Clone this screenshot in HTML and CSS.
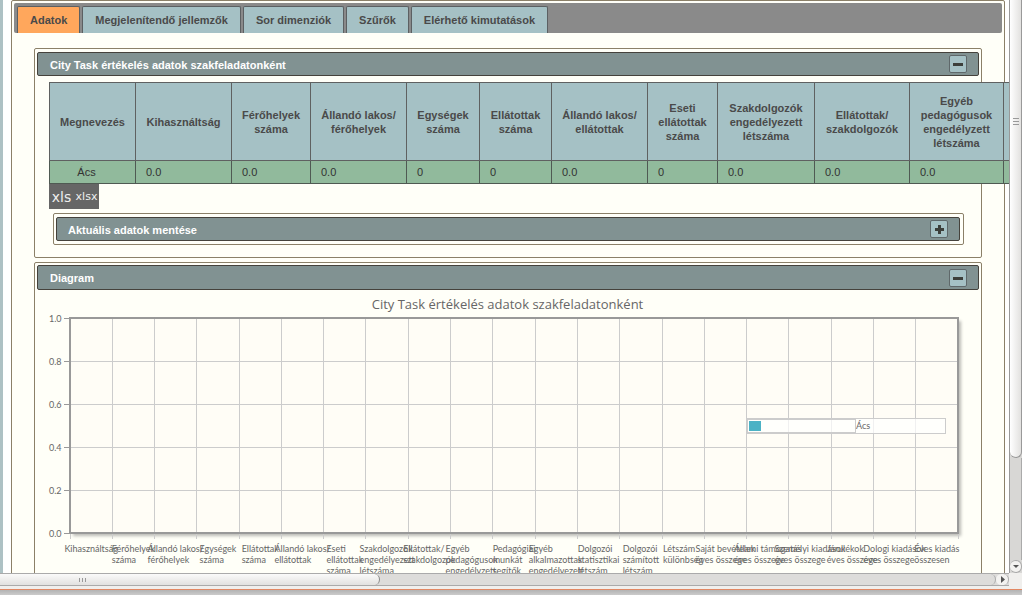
FILE: index.html
```html
<!DOCTYPE html>
<html lang="hu">
<head>
<meta charset="utf-8">
<title>City Task értékelés</title>
<link rel="stylesheet" href="styles.css">
</head>
<body>
<div class="view">
  <div class="pane">
    <main class="sheet">
      <nav class="tabs">
        <button class="tab active" type="button">Adatok</button>
        <button class="tab" type="button">Megjelenítendő jellemzők</button>
        <button class="tab" type="button">Sor dimenziók</button>
        <button class="tab" type="button">Szűrők</button>
        <button class="tab" type="button">Elérhető kimutatások</button>
      </nav>
      <div class="content">
        <section class="panel">
          <header class="bar"><h2>City Task értékelés adatok szakfeladatonként</h2>
            <button class="toggle" type="button" aria-label="Összecsukás"><svg width="16" height="16"><path d="M3 7h10v3H3z"/></svg></button></header>
          <div class="body">
            <table class="data">
              <colgroup><col class="w86"><col class="w96"><col class="w79"><col class="w96"><col class="w73"><col class="w72"><col class="w96"><col class="w70"><col class="w97"><col class="w95"><col class="w94"><col class="w96"></colgroup>
              <thead><tr>
                <th>Megnevezés</th><th>Kihasználtság</th><th>Férőhelyek<br>száma</th><th>Állandó lakos/<br>férőhelyek</th><th>Egységek<br>száma</th><th>Ellátottak<br>száma</th><th>Állandó lakos/<br>ellátottak</th><th>Eseti<br>ellátottak<br>száma</th><th>Szakdolgozók<br>engedélyezett<br>létszáma</th><th>Ellátottak/<br>szakdolgozók</th><th>Egyéb<br>pedagógusok<br>engedélyzett<br>létszáma</th><th></th>
              </tr></thead>
              <tbody><tr>
                <td class="name">Ács</td><td>0.0</td><td>0.0</td><td>0.0</td><td>0</td><td>0</td><td>0.0</td><td>0</td><td>0.0</td><td>0.0</td><td>0.0</td><td></td>
              </tr></tbody>
            </table>
            <div class="exports"><button class="xls" type="button">xls</button><button class="xlsx" type="button">xlsx</button></div>
            <section class="panel nested">
              <header class="bar"><h2>Aktuális adatok mentése</h2>
                <button class="toggle" type="button" aria-label="Kinyitás"><svg width="16" height="16"><path d="M4 7h3V4h3v3h3v3h-3v3H7v-3H4z"/></svg></button></header>
            </section>
          </div>
        </section>
        <section class="panel diagram">
          <header class="bar"><h2>Diagram</h2>
            <button class="toggle" type="button" aria-label="Összecsukás"><svg width="16" height="16"><path d="M3 7h10v3H3z"/></svg></button></header>
          <div class="chart">
            <h3>City Task értékelés adatok szakfeladatonként</h3>
            <div class="axes">
              <div class="yaxis"><span>1.0</span><span>0.8</span><span>0.6</span><span>0.4</span><span>0.2</span><span>0.0</span></div>
              <div class="plot">
                <svg class="grid" width="100%" height="215">
                  <g class="lines">
                    <line x1="0" x2="0" y1="215" y2="221"/>
                    <line x1="4.762%" x2="4.762%" y2="221"/><line x1="9.524%" x2="9.524%" y2="221"/><line x1="14.286%" x2="14.286%" y2="221"/><line x1="19.048%" x2="19.048%" y2="221"/><line x1="23.81%" x2="23.81%" y2="221"/><line x1="28.571%" x2="28.571%" y2="221"/><line x1="33.333%" x2="33.333%" y2="221"/><line x1="38.095%" x2="38.095%" y2="221"/><line x1="42.857%" x2="42.857%" y2="221"/><line x1="47.619%" x2="47.619%" y2="221"/><line x1="52.381%" x2="52.381%" y2="221"/><line x1="57.143%" x2="57.143%" y2="221"/><line x1="61.905%" x2="61.905%" y2="221"/><line x1="66.667%" x2="66.667%" y2="221"/><line x1="71.429%" x2="71.429%" y2="221"/><line x1="76.19%" x2="76.19%" y2="221"/><line x1="80.952%" x2="80.952%" y2="221"/><line x1="85.714%" x2="85.714%" y2="221"/><line x1="90.476%" x2="90.476%" y2="221"/><line x1="95.238%" x2="95.238%" y2="221"/>
                    <line x1="100%" x2="100%" y1="215" y2="221"/>
                    <line x2="100%" y1="43" y2="43"/><line x2="100%" y1="86" y2="86"/><line x2="100%" y1="129" y2="129"/><line x2="100%" y1="172" y2="172"/>
                  </g>
                  <path class="ticks" d="M-6 0h6M-6 43h6M-6 86h6M-6 129h6M-6 172h6M-6 215h6"/>
                  <rect class="frame" width="100%" height="215"/>
                </svg>
                <div class="legend"><span class="key"><i></i></span><span>Ács</span></div>
              </div>
              <div class="xaxis">
                <span>Kihasználtság</span><span>Férőhelyek<br>száma</span><span>Állandó lakos/<br>férőhelyek</span><span>Egységek<br>száma</span><span>Ellátottak<br>száma</span><span>Állandó lakos/<br>ellátottak</span><span>Eseti<br>ellátottak<br>száma</span><span>Szakdolgozók<br>engedélyezett<br>létszáma</span><span>Ellátottak/<br>szakdolgozók</span><span>Egyéb<br>pedagógusok<br>engedélyzett</span><span>Pedagógiai<br>munkát<br>segítők</span><span>Egyéb<br>alkalmazottak<br>engedélyezett</span><span>Dolgozói<br>statisztikai<br>létszám</span><span>Dolgozói<br>számított<br>létszám</span><span>Létszám<br>különbség</span><span>Saját bevételek<br>éves összege</span><span>Állami támogatás<br>éves összege</span><span>Személyi kiadások<br>éves összege</span><span>Járulékok<br>éves összege</span><span>Dologi kiadások<br>éves összege</span><span>Éves kiadás<br>összesen</span>
              </div>
            </div>
          </div>
        </section>
      </div>
    </main>
  </div>
  <div class="vscroll">
    <div class="vthumb"><svg width="11" height="9"><path d="M3 1.500h6M3 4.500h6M3 7.500h6"/></svg></div>
    <div class="vtrack"></div>
    <div class="vdown"><svg width="11" height="12"><path d="M3 4h6L6 7z"/></svg></div>
  </div>
  <div class="hscroll">
    <div class="hthumb"><svg width="9" height="11"><path d="M1.500 4v4M4.500 4v4M7.500 4v4"/></svg></div>
    <div class="htrack"></div>
    <div class="hright"><svg width="13" height="11"><path d="M5 2v7l4-3.500z"/></svg></div>
  </div>
  <div class="corner"></div>
</div>
<footer class="edge"><div></div></footer>
</body>
</html>
```
FILE: styles.css
```css
* { box-sizing: border-box; }
body {
  margin: 0;
  height: 100vh;
  display: flex;
  flex-direction: column;
  overflow: hidden;
  background: #f0efed;
  font: 11px/14px "Liberation Sans", Arial, sans-serif;
}
button { margin: 0; padding: 0; font: inherit; cursor: pointer; }
h2, h3 { margin: 0; }
svg { display: block; }

.view {
  flex: 1;
  min-height: 0;
  display: grid;
  grid-template-columns: minmax(0, 1fr) 13px;
  grid-template-rows: minmax(0, 1fr) 13px;
}
.pane {
  overflow: hidden;
  background: #fff;
  border-left: 3px solid #adc1c4;
  padding: 0 4px 0 8px;
}
.sheet {
  border: 1px solid #8b8068;
  border-radius: 2px;
  background: #fffff8;
  padding: 2px;
  min-height: 700px;
}
.tabs {
  display: flex;
  gap: 2px;
  height: 30px;
  padding: 3px 3px 0;
  border-radius: 2px;
  background: #8a8a8a;
}
.tab {
  padding: 0 12px;
  border: 1px solid #5c6062;
  border-bottom: 0;
  border-radius: 2px 2px 0 0;
  background: #a5c1c5;
  color: #4a4a4a;
  font-weight: bold;
  white-space: nowrap;
}
.tab.active { background: #ffa75c; }
.content { padding: 15px 20px 0; }

.panel {
  border: 1px solid #8b8068;
  border-radius: 2px;
  padding: 3px 2px 0;
  margin-bottom: 4px;
}
.bar {
  display: flex;
  align-items: center;
  justify-content: space-between;
  height: 24px;
  padding: 0 11px 0 12px;
  border: 1px solid #45423c;
  border-radius: 2px;
  background: #819292;
}
.bar h2 {
  padding-top: 2px;
  color: #fff;
  font-size: 11px;
  line-height: 14px;
}
.toggle {
  width: 18px;
  height: 18px;
  border: 1px solid #5f686a;
  border-radius: 2px;
  background: #a5c1c5;
}
.toggle path { fill: #3c3f3b; }
.body { padding: 6px 12px 12px; }

.data {
  width: 1051px;
  table-layout: fixed;
  border-collapse: collapse;
  color: #333;
}
.w70 { width: 70px; }
.w72 { width: 72px; }
.w73 { width: 73px; }
.w79 { width: 79px; }
.w86 { width: 86px; }
.w94 { width: 94px; }
.w95 { width: 95px; }
.w96 { width: 96px; }
.w97 { width: 97px; }
.data th {
  height: 78px;
  padding: 0;
  border: 1px solid #5f6161;
  background: #a5c1c5;
  color: #4a4a4a;
  white-space: nowrap;
}
.data td {
  height: 23px;
  padding: 0 10px;
  border: 1px solid #4f5a53;
  background: #91ba9c;
}
.data .name { padding: 0 12px 0 0; text-align: center; }

.exports {
  display: inline-flex;
  height: 25px;
  background: #666;
  vertical-align: top;
}
.exports button {
  width: 25px;
  border: 0;
  background: none;
  color: #eee;
  font-family: "DejaVu Sans", sans-serif;
}
.exports .xls { font-size: 14px; }
.exports .xlsx { font-size: 11px; }
.nested { margin: 4px 3px 0 4px; padding-bottom: 3px; }
.nested .bar { margin-right: 1px; padding-left: 11px; }

.diagram { padding-top: 2px; }
.diagram > .bar { height: 25px; }
.diagram > .bar h2 { padding-top: 0; }
.chart {
  padding: 6px 21px 20px 12px;
  color: #666;
  font-family: "Open Sans", "Noto Sans", sans-serif;
}
.chart h3 {
  padding-left: 8px;
  font-size: 13px;
  font-weight: normal;
  line-height: 16px;
  text-align: center;
}
.axes {
  display: grid;
  grid-template-columns: 21px minmax(0, 1fr);
  padding-top: 6px;
  font-family: Lato, "Open Sans", sans-serif;
  font-size: 9px;
  line-height: 11px;
}
.yaxis {
  display: flex;
  flex-direction: column;
  justify-content: space-between;
  height: 226px;
  margin: -5px 0;
}
.plot {
  position: relative;
  height: 215px;
  background: #fffdf6;
  box-shadow: 3px 3px 3px #bbbbb6;
}
.grid { overflow: visible; shape-rendering: crispEdges; }
.lines { stroke: #ccc; }
.ticks { stroke: #999; }
.frame { fill: none; stroke: #999; stroke-width: 2; }
.legend {
  position: absolute;
  top: 100px;
  right: 12px;
  display: flex;
  width: 200px;
  height: 16px;
  border: 1px solid #ccc;
  background: rgba(255, 255, 255, .7);
  line-height: 14px;
}
.key { width: 109px; padding: 1px; border: 1px solid #ccc; }
.key i { display: block; width: 12px; height: 10px; background: #4bb2c5; }
.xaxis {
  grid-column: 2;
  display: grid;
  grid-template-columns: repeat(21, minmax(0, 1fr));
  justify-items: center;
  padding-top: 9px;
}
.xaxis span { width: max-content; }

.vscroll {
  display: flex;
  flex-direction: column;
  border-left: 1px solid #999;
  background: #d8d7d5;
}
.vthumb {
  flex: 458;
  display: flex;
  align-items: center;
  border: 1px solid #999;
  border-width: 0 1px 1px 0;
  border-radius: 0 0 6px 6px;
  background: linear-gradient(90deg, #fff, #e2e1df);
}
.vthumb svg { margin-top: -215px; fill: none; stroke: #999; }
.vtrack { flex: 102; border-right: 1px solid #aaa; }
.vdown {
  height: 13px;
  border: 1px solid #aaa;
  border-left: 0;
  border-radius: 6px;
  background: #f3f2f0;
}
.vdown path, .hright path { fill: #555; }
.hscroll {
  display: flex;
  border: 1px solid #aaa;
  border-width: 1px 0;
  background: #dddcda;
}
.hthumb {
  flex: 301;
  padding-left: 78px;
  border-right: 1px solid #888;
  border-radius: 0 6px 6px 0;
  background: linear-gradient(#fafafa, #e2e1df);
}
.hthumb path { fill: none; stroke: #999; }
.htrack { flex: 616; border-right: 1px solid #aaa; border-radius: 0 6px 6px 0; }
.hright {
  width: 13px;
  border-right: 1px solid #aaa;
  border-radius: 6px;
  background: #f3f2f0;
}
.edge {
  height: 9px;
  padding-top: 3px;
  background: #f0efed;
}
.edge div {
  height: 6px;
  border-top: 1px solid #e28863;
  background: linear-gradient(#b3b3b3, #cbcbcb);
}
```
